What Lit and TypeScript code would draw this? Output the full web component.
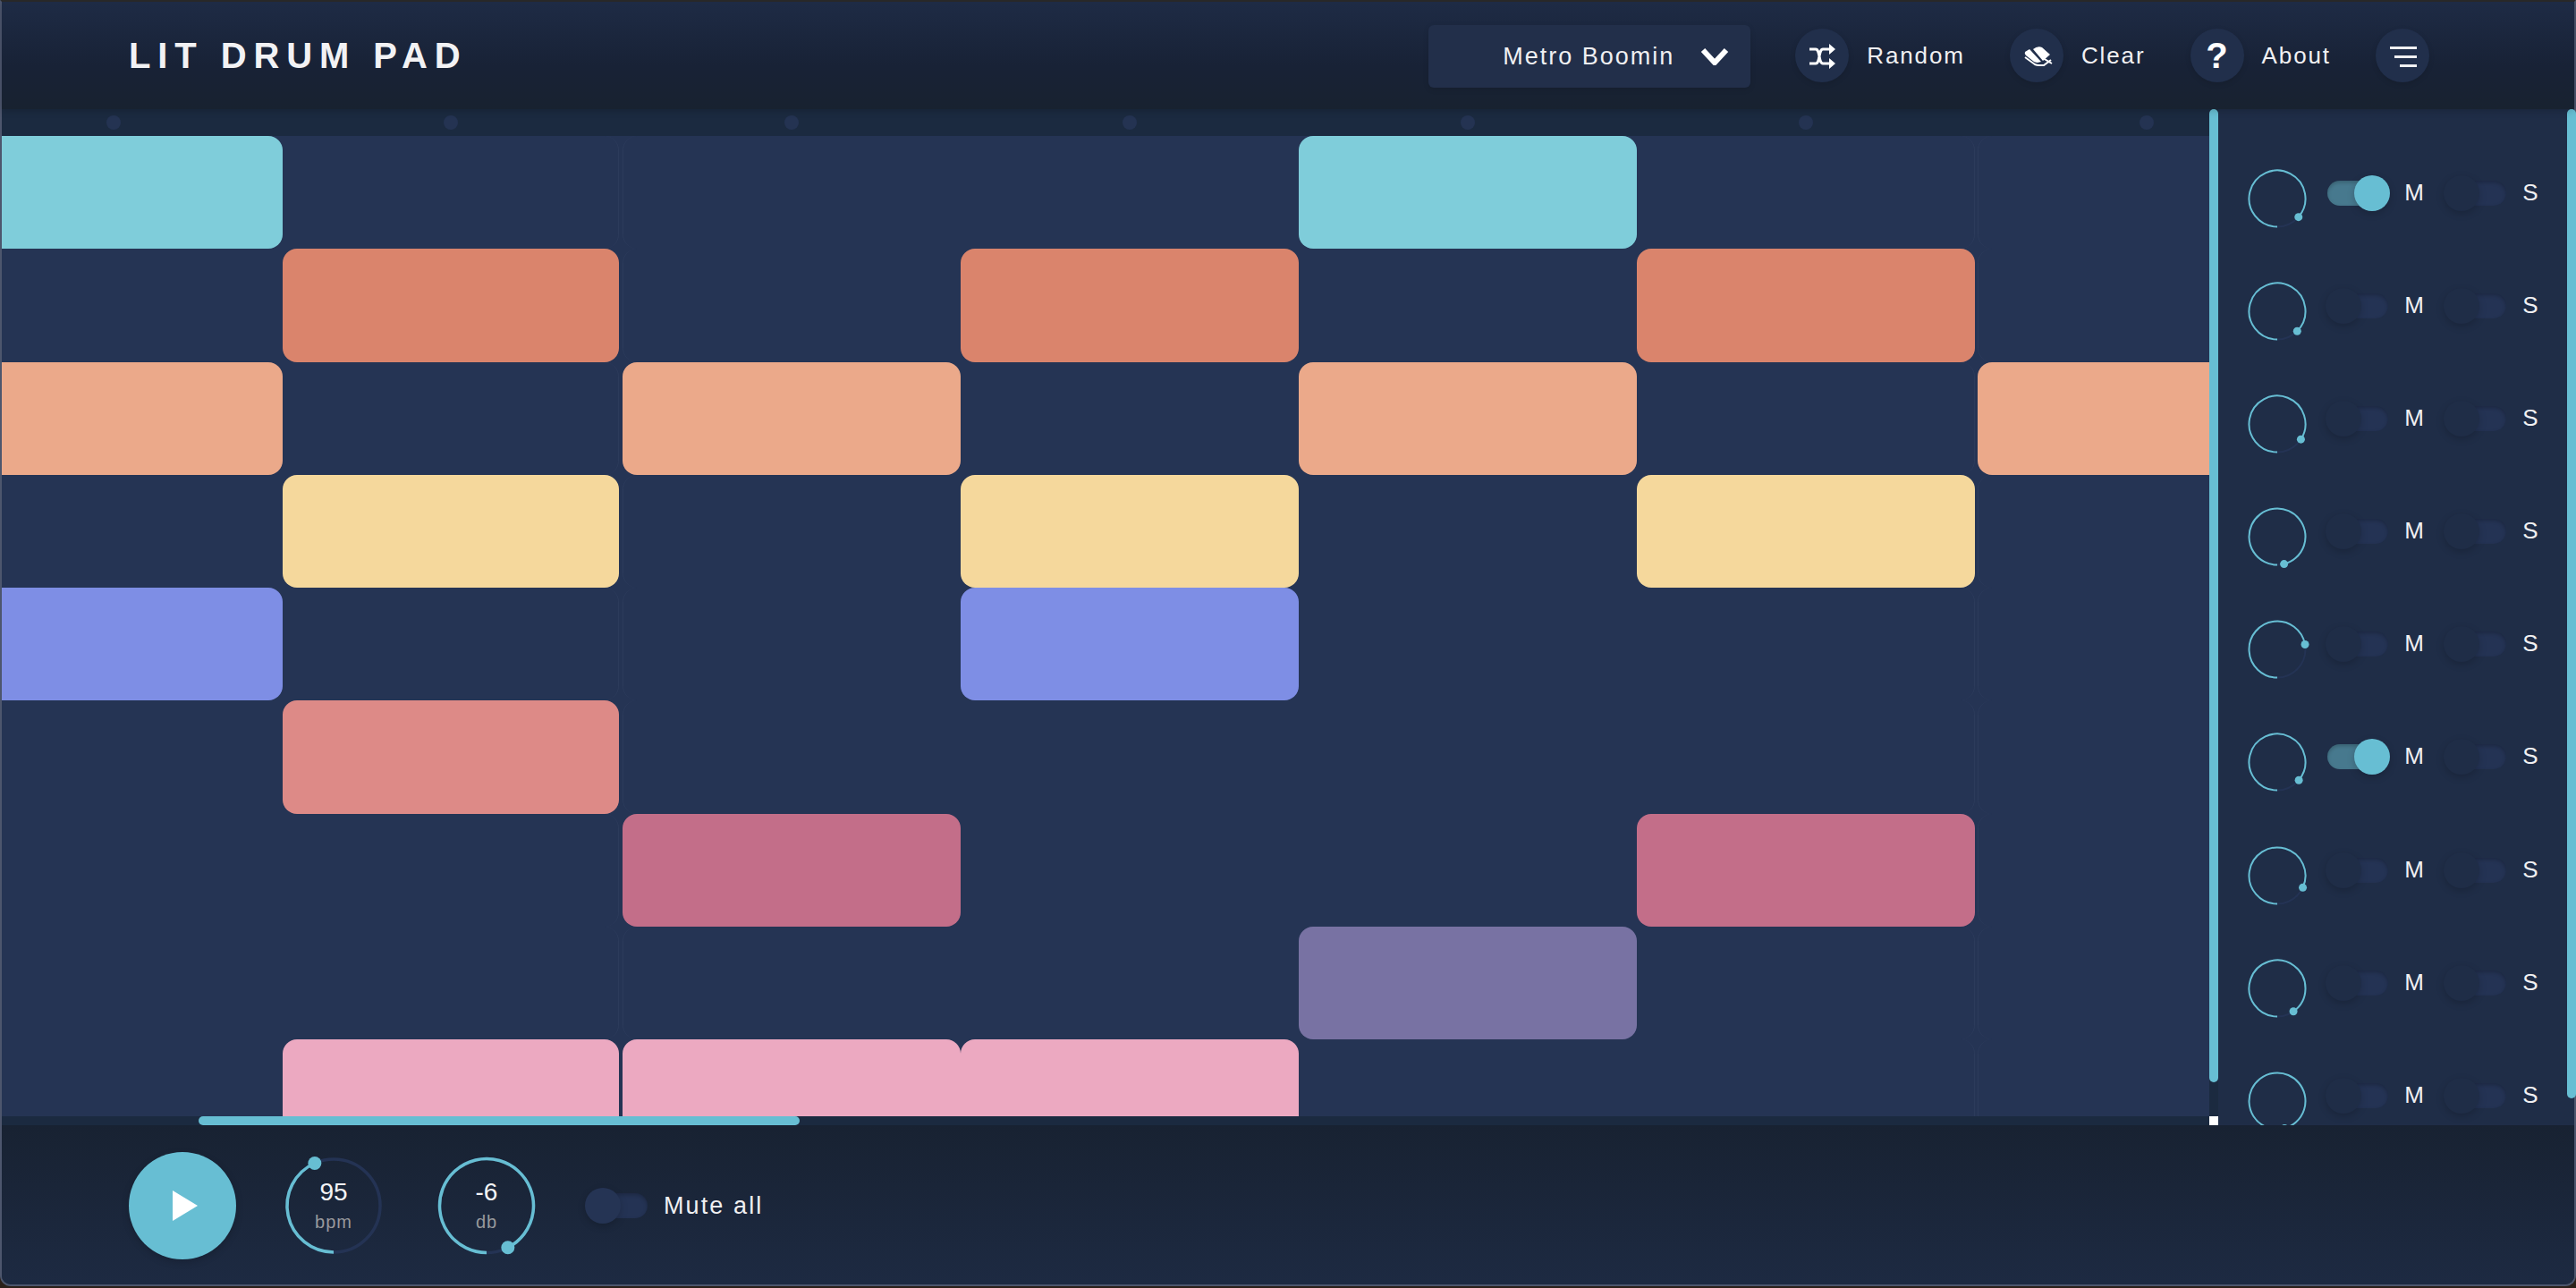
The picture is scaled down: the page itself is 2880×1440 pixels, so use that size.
import { LitElement, css, html } from 'lit';
import { customElement, property } from 'lit/decorators.js';
import { classMap } from 'lit/directives/class-map.js';

const TRACKS = [
  { color: '#7fcdda', steps: [0, 4] },
  { color: '#da846c', steps: [1, 3, 5] },
  { color: '#eba98a', steps: [0, 2, 4, 6] },
  { color: '#f5d89c', steps: [1, 3, 5] },
  { color: '#7e8ee5', steps: [0, 3] },
  { color: '#dd8a87', steps: [1] },
  { color: '#c36e89', steps: [2, 5] },
  { color: '#7872a3', steps: [4] },
  { color: '#eca9c1', steps: [1, 2, 3] },
];

const CHANNELS = [
  { gap: 49, muted: true },
  { gap: 45, muted: false },
  { gap: 57, muted: false },
  { gap: 14, muted: false },
  { gap: 100, muted: false },
  { gap: 50, muted: true },
  { gap: 65, muted: false },
  { gap: 35, muted: false },
  { gap: 15, muted: false },
];

@customElement('drum-dial')
export class DrumDial extends LitElement {
  @property({ type: Number }) size = 66;
  @property({ type: Number }) radius = 31.5;
  @property({ type: Number }) weight = 2;
  @property({ type: Number }) dot = 4.5;
  @property({ type: Number }) sweep = 300;

  static styles = css`
    :host {
      display: grid;
      flex: none;
      place-items: center;
    }

    svg,
    .label {
      grid-area: 1 / 1;
    }

    svg {
      display: block;
      overflow: visible;
    }

    .label {
      display: flex;
      flex-direction: column;
      align-items: center;
    }
  `;

  render() {
    const c = this.size / 2;
    const r = this.radius;
    const a = (this.sweep * Math.PI) / 180;
    const x = c - r * Math.sin(a);
    const y = c + r * Math.cos(a);
    const large = this.sweep > 180 ? 1 : 0;

    return html`
      <svg width=${this.size} height=${this.size} viewBox="0 0 ${this.size} ${this.size}" fill="none">
        <circle cx=${c} cy=${c} r=${r} stroke="#243354" stroke-width=${this.weight}></circle>
        <path d="M${c} ${c + r} A${r} ${r} 0 ${large} 1 ${x} ${y}" stroke="#67bed3" stroke-width=${this.weight}></path>
        <circle cx=${x} cy=${y} r=${this.dot} fill="#67bed3"></circle>
      </svg>
      <div class="label"><slot></slot></div>
    `;
  }
}

@customElement('drum-switch')
export class DrumSwitch extends LitElement {
  @property({ type: Boolean, reflect: true }) on = false;
  @property({ type: Boolean, reflect: true }) bright = false;

  static styles = css`
    :host {
      display: block;
      position: relative;
      flex: none;
      width: 72px;
      height: 40px;
    }

    .track {
      margin: 6px 2px 0;
      height: 28px;
      border-radius: 14px;
      background: #243354;
      box-shadow: inset 0 2px 4px rgba(0, 0, 0, 0.22);
    }

    .thumb {
      position: absolute;
      top: 0;
      left: 0;
      width: 40px;
      height: 40px;
      border-radius: 50%;
      background: #1f2d47;
      box-shadow: 0 3px 8px rgba(0, 0, 0, 0.18);
    }

    :host([bright]) .thumb {
      background: #253454;
    }

    :host([on]) .track {
      background: #47798e;
    }

    :host([on]) .thumb {
      left: 32px;
      background: #67bed3;
    }
  `;

  render() {
    return html`<div class="track"></div><div class="thumb"></div>`;
  }
}

@customElement('app-root')
export class AppRoot extends LitElement {
  static styles = css`
    :host {
      display: block;
      width: 2880px;
      height: 1440px;
      background: #2b2019;
      font-family: 'Liberation Sans', Arial, sans-serif;
      color: #f0f0f2;
    }

    .window {
      box-sizing: border-box;
      display: flex;
      flex-direction: column;
      height: 1438px;
      border: 2px solid #4d566d;
      border-top-color: #2a2a2a;
      border-radius: 0 0 12px 12px;
      background: #182234;
    }

    .header {
      position: relative;
      z-index: 2;
      flex: none;
      display: flex;
      align-items: center;
      gap: 50px;
      box-sizing: border-box;
      height: 120px;
      padding: 0 162px 0 142px;
      background: linear-gradient(#1e2b45, #182236 60%, #182230);
      box-shadow: 0 2px 8px rgba(0, 0, 0, 0.18);
    }

    .title {
      margin: 0 auto 0 0;
      font-size: 40px;
      font-weight: 700;
      letter-spacing: 7.9px;
      color: #f2f2f4;
    }

    .select {
      display: flex;
      align-items: center;
      justify-content: flex-end;
      gap: 29px;
      box-sizing: border-box;
      width: 360px;
      height: 70px;
      margin-top: 2px;
      padding-right: 24px;
      border-radius: 6px;
      background: #222f4a;
      box-shadow: 0 2px 6px rgba(0, 0, 0, 0.12);
    }

    .select span {
      font-size: 27px;
      letter-spacing: 2px;
    }

    .action span {
      font-size: 26px;
      letter-spacing: 1.9px;
    }

    .action {
      display: flex;
      align-items: center;
      gap: 20px;
    }

    .round {
      display: flex;
      align-items: center;
      justify-content: center;
      width: 60px;
      height: 60px;
      border-radius: 50%;
      background: #212f4b;
      box-shadow: 0 2px 6px rgba(0, 0, 0, 0.12);
      font-size: 40px;
      font-weight: 700;
      color: #fff;
    }

    .body {
      position: relative;
      flex: none;
      display: flex;
      height: 1136px;
    }

    .sequencer {
      flex: none;
      width: 2468px;
      display: flex;
      flex-direction: column;
      background: #1b2a40;
    }

    .grid {
      flex: none;
      height: 1126px;
      overflow: hidden;
    }

    .dots,
    .row {
      display: flex;
      margin-left: -64px;
    }

    .dots {
      height: 30px;
    }

    .row {
      height: 126.25px;
      background: #253454;
    }

    .dot-slot,
    .step {
      box-sizing: border-box;
      flex: none;
      width: 378px;
    }

    .dot-slot {
      display: flex;
      align-items: center;
      justify-content: center;
    }

    .dot-slot i {
      width: 16px;
      height: 16px;
      border-radius: 50%;
      background: #243352;
    }

    .step {
      border-radius: 16px;
    }

    .dots > :nth-child(2),
    .row > :nth-child(2) {
      width: 376px;
    }

    .dots > :nth-child(3),
    .row > :nth-child(3) {
      margin-left: 4px;
    }

    .dots > :nth-child(7),
    .row > :nth-child(7) {
      margin-left: 3px;
    }

    .row > :nth-child(2),
    .row > :nth-child(6) {
      border-right: 1px solid #2c3b5b;
    }

    .row > :nth-child(3),
    .row > :nth-child(7) {
      border-left: 1px solid #2c3b5b;
    }

    .step.active {
      border: none;
    }

    .hbar {
      flex: none;
      height: 10px;
    }

    .hbar i,
    .vbar i,
    .edge-bar {
      display: block;
      border-radius: 5px;
      background: #67bed3;
    }

    .hbar i {
      width: 672px;
      height: 10px;
      margin-left: 220px;
    }

    .vbar {
      flex: none;
      width: 10px;
      display: flex;
      flex-direction: column;
      justify-content: space-between;
      background: #1b2a40;
    }

    .vbar i {
      height: 1088px;
    }

    .vbar b {
      display: block;
      height: 10px;
      background: #fff;
    }

    .panel {
      flex: 1;
      min-width: 0;
      box-sizing: border-box;
      height: 1136px;
      padding: 67px 0 0 33px;
      overflow: hidden;
      background: #1f2d47;
    }

    .channel {
      display: flex;
      align-items: flex-start;
      height: 126.1px;
    }

    .channel drum-dial {
      margin-right: 21px;
    }

    .channel drum-switch {
      margin-top: 7px;
    }

    .channel span {
      flex: none;
      width: 54px;
      margin: 11px 6px 0 0;
      text-align: center;
      font-size: 26px;
      line-height: 30px;
      color: #f0f0f2;
    }

    .channel span.solo {
      width: 50px;
      margin-right: 0;
    }

    .edge-bar {
      position: absolute;
      z-index: 1;
      top: 0;
      right: -2px;
      width: 10px;
      height: 1106px;
    }

    .footer {
      flex: 1;
      display: flex;
      align-items: center;
      padding: 2px 0 0 142px;
      border-radius: 0 0 10px 10px;
      background: linear-gradient(#182232, #1d2a42);
    }

    .play {
      flex: none;
      display: flex;
      align-items: center;
      justify-content: center;
      box-sizing: border-box;
      width: 120px;
      height: 120px;
      margin-right: 54px;
      padding-left: 6px;
      border-radius: 50%;
      background: #67bed3;
      box-shadow: 0 3px 8px rgba(0, 0, 0, 0.18);
    }

    .footer drum-dial {
      margin-right: 61px;
    }

    .footer drum-dial + drum-dial {
      margin-right: 55px;
    }

    .value {
      font-size: 28px;
      line-height: 32px;
      color: #f4f4f6;
      transform: translateY(-2px);
    }

    .unit {
      margin-top: 4px;
      font-size: 20px;
      line-height: 22px;
      letter-spacing: 1px;
      color: #98999c;
    }

    .mute {
      margin-left: 16px;
      font-size: 27px;
      letter-spacing: 2.1px;
    }
  `;

  renderAction(label: string, icon: unknown) {
    return html`
      <div class="action">
        <div class="round">${icon}</div>
        <span>${label}</span>
      </div>
    `;
  }

  render() {
    return html`
      <div class="window">
        <header class="header">
          <h1 class="title">LIT DRUM PAD</h1>
          <div class="select">
            <span>Metro Boomin</span>
            <svg width="32" height="20" viewBox="0 0 32 20" fill="none">
              <path d="M3 3 L16 17 L29 3" stroke="#fff" stroke-width="6"></path>
            </svg>
          </div>
          ${this.renderAction('Random', html`
            <svg width="60" height="60" viewBox="0 0 60 60" fill="none">
              <path d="M16 23 H23 C28 23 26 39 31 39 H42 M16 39 H23 C28 39 26 23 31 23 H42" stroke="#fff" stroke-width="3"></path>
              <path d="M38 17 L45 23 L38 29 Z M38 33 L45 39 L38 45 Z" fill="#fff"></path>
            </svg>
          `)}
          ${this.renderAction('Clear', html`
            <svg width="60" height="60" viewBox="0 0 60 60" fill="none">
              <path d="M26 23 Q31 19 36 21 L45 29 L37 36 Z" fill="#fff"></path>
              <path d="M17 26 L22 23 L35 37 L31 38 Q29 38 27 37 L18 30 Q16 28 17 26 Z" fill="#fff"></path>
              <path d="M17 32 L28 40 Q30 41 33 41 H38 L46 35 M37 33 L47 39" stroke="#fff" stroke-width="2"></path>
            </svg>
          `)}
          ${this.renderAction('About', '?')}
          <div class="round">
            <svg width="60" height="60" viewBox="0 0 60 60" fill="none">
              <path d="M16 21.5 H46 M21 31.5 H46 M27 41.5 H46" stroke="#f0f0f2" stroke-width="3"></path>
            </svg>
          </div>
        </header>

        <div class="body">
          <div class="sequencer">
            <div class="grid">
              <div class="dots">
                ${[0, 1, 2, 3, 4, 5, 6].map(() => html`<div class="dot-slot"><i></i></div>`)}
              </div>
              ${TRACKS.map(
                (track) => html`
                  <div class="row">
                    ${[0, 1, 2, 3, 4, 5, 6].map((step) => {
                      const active = track.steps.includes(step);
                      return html`<div
                        class=${classMap({ step: true, active })}
                        style=${active ? `background: ${track.color}` : ''}
                      ></div>`;
                    })}
                  </div>
                `,
              )}
            </div>
            <div class="hbar"><i></i></div>
          </div>

          <div class="vbar"><i></i><b></b></div>

          <aside class="panel">
            ${CHANNELS.map(
              (channel) => html`
                <div class="channel">
                  <drum-dial .sweep=${360 - channel.gap}></drum-dial>
                  <drum-switch ?on=${channel.muted}></drum-switch>
                  <span>M</span>
                  <drum-switch></drum-switch>
                  <span class="solo">S</span>
                </div>
              `,
            )}
          </aside>
          <div class="edge-bar"></div>
        </div>

        <footer class="footer">
          <div class="play">
            <svg width="28" height="34" viewBox="0 0 28 34"><path d="M0 0 L28 17 L0 34 Z" fill="#fff"></path></svg>
          </div>
          <drum-dial .size=${110} .radius=${52} .weight=${3.5} .dot=${7.5} .sweep=${156}>
            <div class="value">95</div>
            <div class="unit">bpm</div>
          </drum-dial>
          <drum-dial .size=${110} .radius=${52.5} .weight=${3.5} .dot=${7.5} .sweep=${333}>
            <div class="value">-6</div>
            <div class="unit">db</div>
          </drum-dial>
          <drum-switch bright></drum-switch>
          <div class="mute">Mute all</div>
        </footer>
      </div>
    `;
  }
}
